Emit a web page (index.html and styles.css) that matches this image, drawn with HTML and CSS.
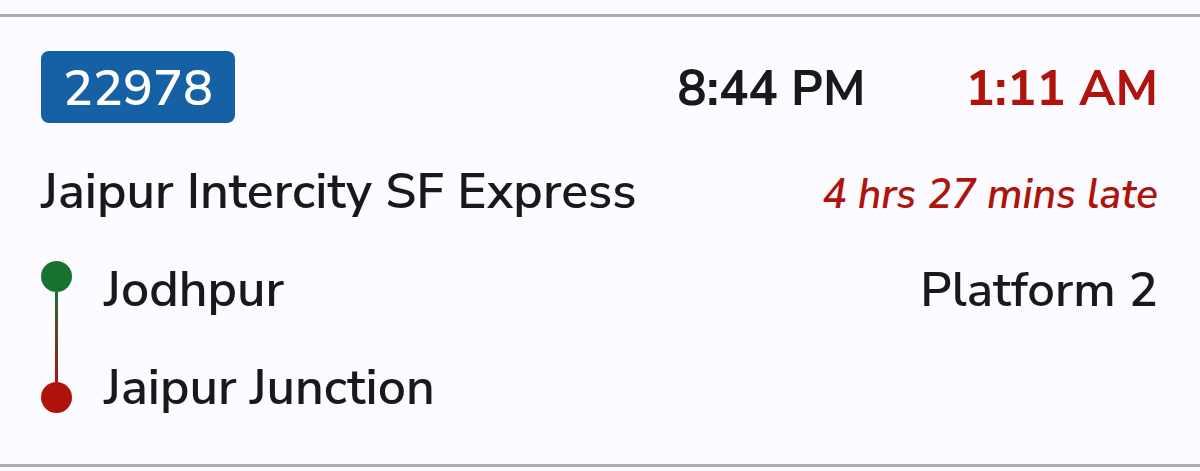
FILE: index.html
```html
<!DOCTYPE html>
<html lang="en">
<head>
  <meta charset="UTF-8" />
  <meta name="viewport" content="width=device-width, initial-scale=1" />
  <title>Jaipur Intercity SF Express</title>
  <link rel="stylesheet" href="styles.css">
</head>
<body>
  <article class="train">
    <div class="row row-top">
      <span class="train-number">22978</span>
      <div class="times">
        <time class="scheduled">8:44 PM</time>
        <time class="expected">1:11 AM</time>
      </div>
    </div>

    <div class="row row-name">
      <h1 class="train-name">Jaipur Intercity SF Express</h1>
      <span class="delay">4 hrs 27 mins late</span>
    </div>

    <div class="row row-route">
      <div class="route">
        <div class="track">
          <span class="dot dot-start"></span>
          <span class="line"></span>
          <span class="dot dot-end"></span>
        </div>
        <ul class="stations">
          <li>Jodhpur</li>
          <li>Jaipur Junction</li>
        </ul>
      </div>
      <span class="platform">Platform 2</span>
    </div>
  </article>
</body>
</html>
```

FILE: styles.css
```css
* {
  margin: 0;
  padding: 0;
  box-sizing: border-box;
}

body {
  padding-top: 14px;
  font-family: "Nunito Sans", Nunito, "Open Sans", "Noto Sans", sans-serif;
  font-size: 50px;
  font-weight: 600;
  line-height: 72px;
  color: #17191c;
  background-color: #fcfbff;
}

.train {
  padding: 34px 42px 40px 41px;
  border-top: 3px solid #adacb0;
  border-bottom: 3px solid #adacb0;
}

.row {
  display: flex;
  justify-content: space-between;
}

.row-top {
  align-items: center;
  line-height: 68px;
}

.train-number {
  padding: 4px 22px 0;
  border-radius: 8px;
  color: #fff;
  background-color: #1660a5;
}

.times {
  display: flex;
  gap: 100px;
  padding-top: 4px;
  font-size: 49px;
  font-weight: 700;
}

.expected,
.delay {
  color: #b0120c;
}

.row-name {
  align-items: baseline;
  margin-top: 33px;
}

.train-name {
  font-size: 50px;
  font-weight: 600;
}

.delay {
  font-size: 41px;
  font-style: italic;
}

.row-route {
  margin-top: 23px;
}

.route {
  display: flex;
  gap: 32px;
}

.track {
  display: flex;
  flex-direction: column;
  align-items: center;
  padding: 7px 0 11px;
}

.dot {
  width: 31px;
  height: 31px;
  border-radius: 50%;
}

.dot-start {
  background-color: #17722f;
}

.dot-end {
  background-color: #b0120c;
}

.line {
  flex: 1;
  width: 3px;
  background: linear-gradient(#17722f, #b0120c);
}

.stations {
  display: flex;
  flex-direction: column;
  gap: 26px;
  list-style: none;
}

.platform {
  font-size: 49px;
}
```
